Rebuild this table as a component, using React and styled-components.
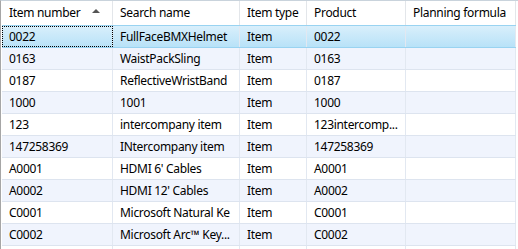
import styled, { createGlobalStyle } from "styled-components";

const GlobalStyle = createGlobalStyle`
  html, body {
    margin: 0;
    padding: 0;
    background: #fff;
  }
  body {
    font-family: "Segoe UI", "Noto Sans", "Open Sans", sans-serif;
    font-size: 12px;
    letter-spacing: -0.3px;
    color: #000;
  }
`;

const columns = [
  { key: "item", label: "Item number", width: 111, sorted: true },
  { key: "search", label: "Search name", width: 127 },
  { key: "type", label: "Item type", width: 67 },
  { key: "product", label: "Product", width: 99 },
  { key: "formula", label: "Planning formula", width: 110 },
];

const rows = [
  ["0022", "FullFaceBMXHelmet", "Item", "0022", ""],
  ["0163", "WaistPackSling", "Item", "0163", ""],
  ["0187", "ReflectiveWristBand", "Item", "0187", ""],
  ["1000", "1001", "Item", "1000", ""],
  ["123", "intercompany item", "Item", "123intercomp...", ""],
  ["147258369", "INtercompany item", "Item", "147258369", ""],
  ["A0001", "HDMI 6' Cables", "Item", "A0001", ""],
  ["A0002", "HDMI 12' Cables", "Item", "A0002", ""],
  ["C0001", "Microsoft Natural Ke", "Item", "C0001", ""],
  ["C0002", "Microsoft Arc\u2122 Key...", "Item", "C0002", ""],
  ["C0003", "Microsoft Arc\u2122 Mo...", "Item", "C0003", ""],
];

const template = columns.map((c) => `${c.width}px`).join(" ");

const App = () => {
  return (
    <>
      <GlobalStyle />
      <Frame>
        <Grid>
          <HeaderRow>
            {columns.map((c) => (
              <HeaderCell key={c.key}>
                <span>{c.label}</span>
                {c.sorted && <SortArrow />}
              </HeaderCell>
            ))}
          </HeaderRow>
          {rows.map((r, i) => (
            <Row key={r[0]} $alt={i % 2 === 1} $selected={i === 0}>
              {r.map((v, j) => (
                <Cell key={j} $focus={i === 0 && j === 0}>
                  {v}
                </Cell>
              ))}
            </Row>
          ))}
        </Grid>
      </Frame>
    </>
  );
};

export default App;

const Frame = styled.div`
  width: 518px;
  height: 249px;
  overflow: hidden;
  border-top: 1px solid #c9d3dc;
  border-left: 1px solid #a6a6a6;
  box-sizing: border-box;
  padding-left: 1px;
`;

const Grid = styled.div`
  display: flex;
  flex-direction: column;
  width: 514px;
`;

const HeaderRow = styled.div`
  display: grid;
  grid-template-columns: ${template};
  height: 24px;
  border-bottom: 1px solid #dfe3e8;
`;

const HeaderCell = styled.div`
  display: flex;
  align-items: center;
  justify-content: space-between;
  padding: 0 12px 0 7px;
  border-right: 1px solid #e3e6ea;
  white-space: nowrap;
  overflow: hidden;
  padding-bottom: 1px;
`;

const SortArrow = styled.span`
  width: 0;
  height: 0;
  border-left: 4px solid transparent;
  border-right: 4px solid transparent;
  border-bottom: 4px solid #555;
  margin-top: -3px;
`;

const Row = styled.div`
  display: grid;
  grid-template-columns: ${template};
  height: 21px;
  border-bottom: 1px solid ${(p) => (p.$selected ? "#99d3f1" : "#dde4ef")};
  background: ${(p) =>
    p.$selected
      ? "linear-gradient(#d9effb, #b8e2f8)"
      : p.$alt
      ? "#f0f4fd"
      : "#fff"};
  box-shadow: ${(p) => (p.$selected ? "0 -1px 0 #99d3f1" : "none")};
`;

const Cell = styled.div`
  display: flex;
  align-items: center;
  padding: 0 7px;
  border-right: 1px solid #e2e8f1;
  white-space: nowrap;
  overflow: hidden;
  outline: ${(p) => (p.$focus ? "1px dotted #000" : "none")};
  outline-offset: -1px;
`;
